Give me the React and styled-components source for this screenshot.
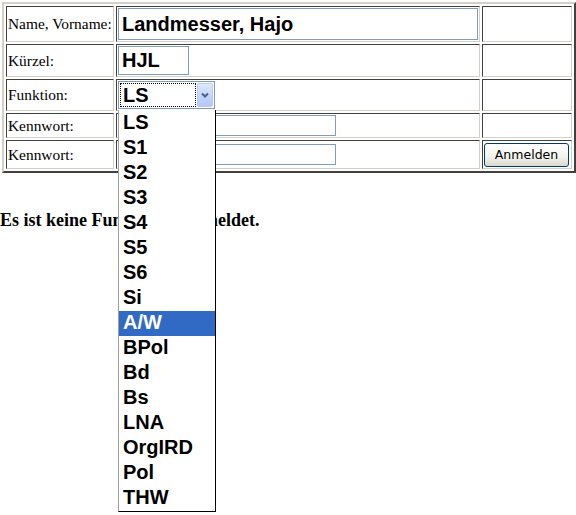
import styled, { createGlobalStyle } from "styled-components";

const GlobalStyle = createGlobalStyle`
  html, body {
    height: 100%;
    overflow: visible;
  }
  body {
    margin: 0;
    background: #fff;
    font-family: "Liberation Serif", "Times New Roman", serif;
    color: #000;
  }
  #root {
    min-height: 100%;
    overflow: visible;
  }
`;

const FormTable = styled.table`
  margin: 2px 0 0 2px;
  width: 574px;
  table-layout: fixed;
  border-collapse: separate;
  border-spacing: 2px;
  border: 2px solid;
  border-color: #d4d0c8 #404040 #404040 #d4d0c8;
`;

const Row = styled.tr`
  height: ${(p) => p.$h}px;
`;

const Cell = styled.td`
  box-sizing: border-box;
  width: ${(p) => (p.$w ? `${p.$w}px` : "auto")};
  padding: 1px;
  border: 1px solid;
  border-color: #404040 #d4d0c8 #d4d0c8 #404040;
  vertical-align: middle;
  font-size: 15.4px;
`;

const TextInput = styled.input`
  display: block;
  box-sizing: border-box;
  width: ${(p) => p.$w};
  height: ${(p) => p.$h}px;
  margin: 0;
  padding: 0 3px;
  border: 1px solid #7f9db9;
  background: #fff;
  color: #000;
  font: bold 20px "Liberation Sans", Arial, sans-serif;
  outline: none;
`;

const SelectBox = styled.div`
  position: relative;
  box-sizing: border-box;
  display: flex;
  width: 97px;
  height: 28px;
  padding: 1px;
  border: 1px solid #7f9db9;
  background: #fff;
`;

const SelectValue = styled.div`
  flex: 1;
  display: flex;
  align-items: center;
  margin-right: 1px;
  padding-left: 2px;
  border: 1px dotted #000;
  font: bold 20px "Liberation Sans", Arial, sans-serif;
`;

const ArrowButton = styled.div`
  box-sizing: border-box;
  width: 16px;
  display: flex;
  align-items: center;
  justify-content: center;
  border: 1px solid #b9c9f3;
  border-radius: 2px;
  background: linear-gradient(#dfe8fd, #c0d2fb 60%, #b4c8f7);
`;

const OptionList = styled.ul`
  position: absolute;
  top: 28px;
  left: -1px;
  z-index: 10;
  box-sizing: border-box;
  width: 98px;
  margin: 0;
  padding: 1px 0 0;
  list-style: none;
  background: #fff;
  border: 1px solid #000;
  border-top: none;
  border-left-color: #a0a0a0;
`;

const Option = styled.li`
  height: 25px;
  overflow: hidden;
  line-height: 27px;
  padding-left: 4px;
  font: bold 20px "Liberation Sans", Arial, sans-serif;
  background: ${(p) => (p.$active ? "#316ac5" : "#fff")};
  color: ${(p) => (p.$active ? "#fff" : "#000")};
  white-space: nowrap;
`;

const SubmitButton = styled.button`
  display: block;
  box-sizing: border-box;
  width: 85px;
  height: 24px;
  margin: 0;
  padding: 0;
  border: 1px solid #003c74;
  border-radius: 3px;
  background: linear-gradient(#ffffff, #f4f4f0 55%, #dcd8cc);
  color: #000;
  font: 12.5px "DejaVu Sans", Tahoma, sans-serif;
`;

const Message = styled.p`
  position: relative;
  z-index: 0;
  margin: 37px 0 0;
  font: bold 18px "Liberation Serif", "Times New Roman", serif;
`;

const options = [
  "LS", "S1", "S2", "S3", "S4", "S5", "S6", "Si",
  "A/W", "BPol", "Bd", "Bs", "LNA", "OrgIRD", "Pol", "THW",
];

const Chevron = () => (
  <svg width="8" height="6" viewBox="0 0 8 6">
    <path d="M1 1.5 L4 4.5 L7 1.5" fill="none" stroke="#4d6185" strokeWidth="2" />
  </svg>
);

const App = () => {
  return (
    <>
      <GlobalStyle />
      <FormTable>
        <tbody>
          <Row $h={36}>
            <Cell $w={108}>Name, Vorname:</Cell>
            <Cell $w={364}>
              <TextInput $w="100%" $h={32} defaultValue="Landmesser, Hajo" />
            </Cell>
            <Cell $w={90} />
          </Row>
          <Row $h={33}>
            <Cell>Kürzel:</Cell>
            <Cell>
              <TextInput $w="71px" $h={29} defaultValue="HJL" />
            </Cell>
            <Cell />
          </Row>
          <Row $h={32}>
            <Cell>Funktion:</Cell>
            <Cell>
              <SelectBox>
                <SelectValue>LS</SelectValue>
                <ArrowButton>
                  <Chevron />
                </ArrowButton>
                <OptionList>
                  {options.map((o) => (
                    <Option key={o} $active={o === "A/W"}>
                      {o}
                    </Option>
                  ))}
                </OptionList>
              </SelectBox>
            </Cell>
            <Cell />
          </Row>
          <Row $h={25}>
            <Cell>Kennwort:</Cell>
            <Cell>
              <TextInput type="password" $w="218px" $h={21} />
            </Cell>
            <Cell />
          </Row>
          <Row $h={29}>
            <Cell>Kennwort:</Cell>
            <Cell>
              <TextInput type="password" $w="218px" $h={21} />
            </Cell>
            <Cell>
              <SubmitButton>Anmelden</SubmitButton>
            </Cell>
          </Row>
        </tbody>
      </FormTable>
      <Message>Es ist keine Funktion angemeldet.</Message>
    </>
  );
};

export default App;
